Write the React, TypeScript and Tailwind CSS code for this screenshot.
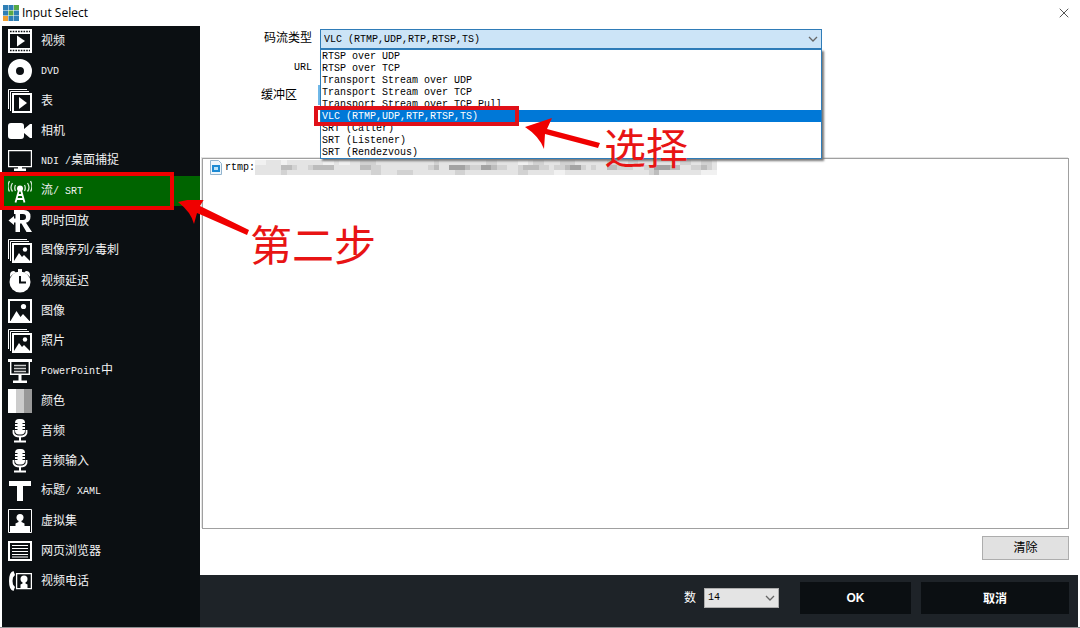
import { useState, type ReactNode } from "react";
import { X } from "lucide-react";

const FONT = "font-['Liberation_Mono','Noto_Sans_CJK_SC',monospace]";

/** Sets Latin runs at half the advance of the Chinese characters beside them. */
function Mixed({ text }: { text: string }) {
  const runs = text.match(/[\x00-\x7f]+|[^\x00-\x7f]+/g) ?? [];
  return (
    <span className="whitespace-pre">
      {runs.map((run, i) => (
        <span key={i} className={run.charCodeAt(0) < 128 ? "text-[10px]" : "text-xs"}>
          {run}
        </span>
      ))}
    </span>
  );
}

function Icon({ children }: { children: ReactNode }) {
  return (
    <svg viewBox="0 0 24 24" className="size-6 shrink-0" fill="#fff" aria-hidden="true">
      {children}
    </svg>
  );
}

const stackedFrames = (
  <>
    <path d="M.5 20V.5H19M2.5 22V2.5H21" fill="none" stroke="#fff" />
    <path d="M4 4h20v20H4zM6 6v16h16v-16z" fillRule="evenodd" />
  </>
);

const pictures = (
  <Icon>
    {stackedFrames}
    <path d="M6 22l5-8 3 4 2-2 6 6z" />
    <circle cx="17" cy="10.500" r="2.200" />
  </Icon>
);

const microphone = (
  <Icon>
    <rect x="7" y="0" width="10" height="15.500" rx="4" />
    <path d="M7 4.500h2.500M7 7.500h2.500M7 10.500h2.500M14.500 4.500h2.500M14.500 7.500h2.500M14.500 10.500h2.500" stroke="#0b0f12" />
    <path d="M5.500 11v3q.8 3.500 6.500 3.500t6.500-3.500V11" fill="none" stroke="#fff" strokeWidth="1.800" />
    <path d="M11 17h2v4.500h5v2H6v-2h5z" />
  </Icon>
);

const sources: { label: string; icon: ReactNode }[] = [
  {
    label: "视频",
    icon: (
      <Icon>
        <path d="M0 0h24v24H0zM2 5v14h20V5z" fillRule="evenodd" />
        <path d="M2 2.500h20M2 21.500h20" stroke="#0b0f12" strokeWidth="1.600" strokeDasharray="1.600 1.100" />
        <path d="M9 6.500l8 5.500-8 5.500z" />
      </Icon>
    ),
  },
  {
    label: "DVD",
    icon: (
      <Icon>
        <path d="M12 0a12 12 0 1 0 0 24 12 12 0 0 0 0-24zm0 8a4 4 0 1 1 0 8 4 4 0 0 1 0-8z" fillRule="evenodd" />
      </Icon>
    ),
  },
  {
    label: "表",
    icon: (
      <Icon>
        {stackedFrames}
        <path d="M11 8l8 6-8 6z" />
      </Icon>
    ),
  },
  {
    label: "相机",
    icon: (
      <Icon>
        <path d="M3 4h10q3 0 3 3v3l6-5h2v14h-2l-6-5v3q0 3-3 3H3q-3 0-3-3V7q0-3 3-3z" />
      </Icon>
    ),
  },
  {
    label: "NDI /桌面捕捉",
    icon: (
      <Icon>
        <path d="M.600 1.600h22.800v16H.600z" fill="none" stroke="#fff" strokeWidth="1.200" />
        <path d="M10 18h4v1.500h4V22H6v-2.500h4z" />
      </Icon>
    ),
  },
  {
    label: "流/ SRT",
    icon: (
      <Icon>
        <circle cx="12" cy="9.500" r="3" />
        <path
          d="M11 11L7.500 23.500M13 11l3.500 12.500M10 16h4M9 20h6"
          fill="none"
          stroke="#fff"
          strokeWidth="1.800"
        />
        <path
          d="M7.500 6q-1.500 3 0 6M4.500 4q-3 4.500 0 8.500M1.500 2q-3 5.500 0 10.500M16.500 6q1.500 3 0 6M19.500 4q3 4.500 0 8.500M22.500 2q3 5.500 0 10.500"
          fill="none"
          stroke="#d5ead5"
          strokeWidth="1.300"
        />
      </Icon>
    ),
  },
  {
    label: "即时回放",
    icon: (
      <Icon>
        <path d="M6 1h9.500q7 0 7 6.500 0 5-4.500 6.300L24 23h-5.500l-5-8.500H12V23H7.500V13.500H6V16l-5.500-4.500L6 7v2.500h1.500V5H6zM12 5v6h3q3 0 3-3t-3-3z" fillRule="evenodd" />
      </Icon>
    ),
  },
  { label: "图像序列/毒刺", icon: pictures },
  {
    label: "视频延迟",
    icon: (
      <Icon>
        <path d="M2 6q0-4 4-4l2 1.500Q4 5 2 8zM22 6q0-4-4-4l-2 1.500Q20 5 22 8zM10 0h4v4h-4z" />
        <circle cx="12" cy="13" r="10.500" />
        <path d="M12 7v6.500h6" fill="none" stroke="#0b0f12" strokeWidth="2" />
      </Icon>
    ),
  },
  {
    label: "图像",
    icon: (
      <Icon>
        <path d="M0 0h24v24H0zM2 2v20h20V2z" fillRule="evenodd" />
        <path d="M2.500 22L8.500 12l4 6 2.500-3 6.500 7z" />
        <circle cx="15.500" cy="7.500" r="2.600" />
      </Icon>
    ),
  },
  { label: "照片", icon: pictures },
  {
    label: "PowerPoint中",
    icon: (
      <Icon>
        <path d="M0 0h24v3H0z" />
        <path d="M2.700 3v12.300h18.600V3" fill="none" stroke="#fff" strokeWidth="1.400" />
        <path d="M6 6.500h12M6 9.500h12M6 12.500h12" stroke="#ccc" strokeWidth="1.300" />
        <path d="M10.500 16h3v5.500H19V24H5v-2.500h5.500z" />
      </Icon>
    ),
  },
  {
    label: "颜色",
    icon: (
      <Icon>
        <path d="M0 0h8v24H0z" />
        <path d="M8 0h8v24H8z" fill="#ccc" />
        <path d="M16 0h8v24h-8z" fill="#999" />
      </Icon>
    ),
  },
  { label: "音频", icon: microphone },
  { label: "音频输入", icon: microphone },
  {
    label: "标题/ XAML",
    icon: (
      <Icon>
        <path d="M1 2h22v5h-8v15H9V7H1z" />
      </Icon>
    ),
  },
  {
    label: "虚拟集",
    icon: (
      <Icon>
        <path d="M.500.500h23v23H.500z" fill="none" stroke="#fff" />
        <circle cx="12" cy="8.500" r="3.500" />
        <path d="M10.500 11h3v2l3 1.500V17H22v6H2v-6h5.500v-2.500l3-1.500z" />
      </Icon>
    ),
  },
  {
    label: "网页浏览器",
    icon: (
      <Icon>
        <path d="M0 2h24v20H0zM2 4v16h20V4z" fillRule="evenodd" />
        <path d="M4 6.500h16M4 9.500h16M4 12.500h16M4 15.500h16M4 18h16" stroke="#fff" />
      </Icon>
    ),
  },
  {
    label: "视频电话",
    icon: (
      <Icon>
        <path d="M5.500 2Q1 3 1 12t4.500 10l1.500-4-2-2.500q-1-3.500 0-7L7 6z" />
        <path d="M8.600 4.600h14.800v15H8.600z" fill="none" stroke="#fff" strokeWidth="1.300" />
        <circle cx="16" cy="10" r="3.500" />
        <path d="M14.500 12h3v2.500l2 1V19h-7v-3.500l2-1z" />
      </Icon>
    ),
  },
];

const streamTypes = [
  "RTSP over UDP",
  "RTSP over TCP",
  "Transport Stream over UDP",
  "Transport Stream over TCP",
  "Transport Stream over TCP Pull",
  "VLC (RTMP,UDP,RTP,RTSP,TS)",
  "SRT (Caller)",
  "SRT (Listener)",
  "SRT (Rendezvous)",
];

/** Grey levels of the censored address, one digit per block. */
const mosaic = [
  "1122212222222112112233322222222222322222222233222211233222333222222332233222222223322332",
  "2222244322344442222244332222222223422555433554332234443323345532322443332233555442233432",
  "2222232222222222222222332223332222222233222222222233222221122222222222222223422222222111",
];
const shades = ["#ffffff", "#f1f1f1", "#e4e4e4", "#d2d2d2", "#bcbcbc", "#a3a3a3"];

function Mosaic() {
  return (
    <svg viewBox="0 0 462 15" className="h-[15px] w-[462px] shrink-0" shapeRendering="crispEdges" aria-hidden="true">
      {mosaic.map((row, y) =>
        [...row].map((level, x) => (
          <rect key={`${x}-${y}`} x={x * 5.25} y={y * 5} width="5.250" height="5" fill={shades[Number(level)]} />
        )),
      )}
    </svg>
  );
}

function Chevron() {
  return (
    <svg
      viewBox="0 0 10 6"
      className="pointer-events-none absolute top-1/2 right-1 h-1.5 w-2.5 -translate-y-1/2"
      fill="none"
      stroke="#666"
      strokeWidth="1.300"
      aria-hidden="true"
    >
      <path d="M1 1l4 4 4-4" />
    </svg>
  );
}

const logo = [
  "#2f7fb5", "#2f7fb5", "#58a846",
  "#2f7fb5", "#58a846", "#2f7fb5",
  "#f0a030", "#2f7fb5", "#2f7fb5",
];

export default function App() {
  const [active, setActive] = useState(5);
  const [stream, setStream] = useState(5);

  return (
    <div className={`flex min-h-screen flex-col border-b border-[#8d9092] bg-white text-xs text-black ${FONT}`}>
      <header className="flex h-[26px] items-center justify-between pr-2 pl-[3px]">
        <div className="flex items-center gap-[3px]">
          <svg viewBox="0 0 16 16" className="size-4" aria-hidden="true">
            {logo.map((color, i) => (
              <rect key={i} x={(i % 3) * 5.5} y={Math.floor(i / 3) * 5.5} width="5" height="5" fill={color} />
            ))}
          </svg>
          <h1 className="font-['Open_Sans',sans-serif] text-xs">Input Select</h1>
        </div>
        <button type="button" aria-label="Close" className="flex">
          <X className="size-4 text-[#555]" strokeWidth={1.5} />
        </button>
      </header>

      <div className="flex flex-1 pr-0.5 pl-0.5">
        <nav className="w-[198px] shrink-0 bg-[#0b0f12] text-[#f2f2f2]">
          <ul>
            {sources.map((source, i) => (
              <li key={source.label} className="relative">
                <button
                  type="button"
                  onClick={() => setActive(i)}
                  className={`flex h-[30px] w-full items-center gap-[9px] pl-1.5 leading-4 ${i === active ? "bg-[#006400]" : ""}`}
                >
                  {source.icon}
                  <span className="pt-px">
                    <Mixed text={source.label} />
                  </span>
                </button>
                {i === 5 && (
                  <div className="pointer-events-none absolute -top-1 -left-0.5 z-10 h-[38px] w-[174px] border-4 border-[#f00000]">
                    <svg viewBox="0 0 76 42" className="absolute top-[24px] left-[174px] h-[42px] w-[76px]" aria-hidden="true">
                      <path d="M0 2L28-4 22 6 71 30 69 35 19 13 16 24Q13 12 0 2z" fill="#f00000" />
                    </svg>
                    <span className="absolute top-[43px] left-[246px] font-['Noto_Sans_CJK_SC',sans-serif] text-[42px] leading-[48px] whitespace-nowrap text-[#e81414]">
                      第二步
                    </span>
                  </div>
                )}
              </li>
            ))}
          </ul>
        </nav>

        <div className="flex min-w-0 flex-1 flex-col">
          <main className="flex flex-1 flex-col pt-[3px] pr-[9px] pl-0.5">
            <div className="grid grid-cols-[110px_502px] gap-x-2 gap-y-2">
              <label htmlFor="stream-type" className="h-5 text-right leading-5">
                <Mixed text="码流类型" />
              </label>
              <div className="relative">
                <select
                  id="stream-type"
                  value={stream}
                  onChange={(e) => setStream(Number(e.target.value))}
                  className="block h-5 w-full appearance-none border border-[#2f7cb8] bg-[#cce4f7] pt-0.5 pl-[3px] text-[10px]"
                >
                  {streamTypes.map((name, i) => (
                    <option key={name} value={i}>
                      {name}
                    </option>
                  ))}
                </select>
                <Chevron />
                <ul
                  role="listbox"
                  aria-label="码流类型"
                  className="absolute top-full right-0 left-0 z-20 border border-[#2f7cb8] bg-white text-[10px] leading-[14px] shadow-[2px_2px_2px_#777]"
                >
                  {streamTypes.map((name, i) => (
                    <li
                      key={name}
                      role="option"
                      aria-selected={i === stream}
                      onClick={() => setStream(i)}
                      className={`h-3 pl-px whitespace-pre ${i === stream ? "bg-[#0078d7] text-white" : ""}`}
                    >
                      {name}
                    </li>
                  ))}
                  <li
                    role="presentation"
                    className="pointer-events-none absolute top-[56px] -left-[7px] h-5 w-[205px] border-4 border-[#e01018]"
                  >
                    <svg viewBox="0 0 76 32" className="absolute top-[8px] left-[207px] h-8 w-[76px]" aria-hidden="true">
                      <path d="M0 9L27 0 22 11 75 25 73 30 20 16 19 31Q14 18 0 9z" fill="#f00000" />
                    </svg>
                    <span className="absolute top-[12px] left-[286px] font-['Noto_Sans_CJK_SC',sans-serif] text-[42px] leading-[48px] whitespace-nowrap text-[#e81414]">
                      选择
                    </span>
                  </li>
                </ul>
              </div>

              <label htmlFor="url" className="h-5 text-right leading-5">
                <Mixed text="URL" />
              </label>
              <input id="url" className="h-5 w-full border border-[#777] px-1" />

              <label htmlFor="buffer" className="h-5 pr-[15px] text-right leading-[22px]">
                <Mixed text="缓冲区" />
              </label>
              <input id="buffer" className="-ml-0.5 h-5 w-24 border-l-2 border-[#70b8e8] px-1" />
            </div>

            <ul className="mt-[53px] min-h-40 flex-1 border border-[#a0a0a0] bg-white p-px shadow-[-1px_-1px_0_#e4e4e4]">
              <li className="flex items-center pl-1.5">
                <svg viewBox="0 0 12 15" className="h-[15px] w-3" aria-hidden="true">
                  <path d="M.500.500h8l3 3v11H.500z" fill="#eef6fc" stroke="#92b4ce" />
                  <path d="M2 5h8v7H2z" fill="#1c8ad4" />
                  <path d="M4 7h4v3H4z" fill="#b9e3fa" />
                </svg>
                <span className="pl-[3px] text-[10px]">rtmp:</span>
                <Mosaic />
              </li>
            </ul>

            <div className="flex justify-end pt-[7px] pb-[15px]">
              <button type="button" className="h-6 w-[87px] border border-[#adadad] bg-[#e1e1e1] pt-0.5">
                清除
              </button>
            </div>
          </main>

          <footer className="flex h-[52px] items-start justify-end bg-[#1e2328] pt-[7px] pr-[9px] text-white">
            <div className="flex h-8 items-center gap-2">
              <label htmlFor="count" className="pt-0.5">数</label>
              <div className="relative">
                <select
                  id="count"
                  defaultValue="14"
                  className="block h-5 w-[75px] appearance-none border border-[#adadad] bg-[#e4e4e4] pl-[3px] text-[10px] text-black"
                >
                  <option>14</option>
                </select>
                <Chevron />
              </div>
            </div>
            <button
              type="button"
              className="ml-[21px] h-8 w-[111px] bg-[#0b0f12] font-['Liberation_Sans',sans-serif] text-xs font-bold"
            >
              OK
            </button>
            <button
              type="button"
              className="ml-2.5 h-8 w-[148px] bg-[#0b0f12] font-['Noto_Sans_CJK_SC',sans-serif] text-xs font-bold"
            >
              取消
            </button>
          </footer>
        </div>
      </div>
    </div>
  );
}
